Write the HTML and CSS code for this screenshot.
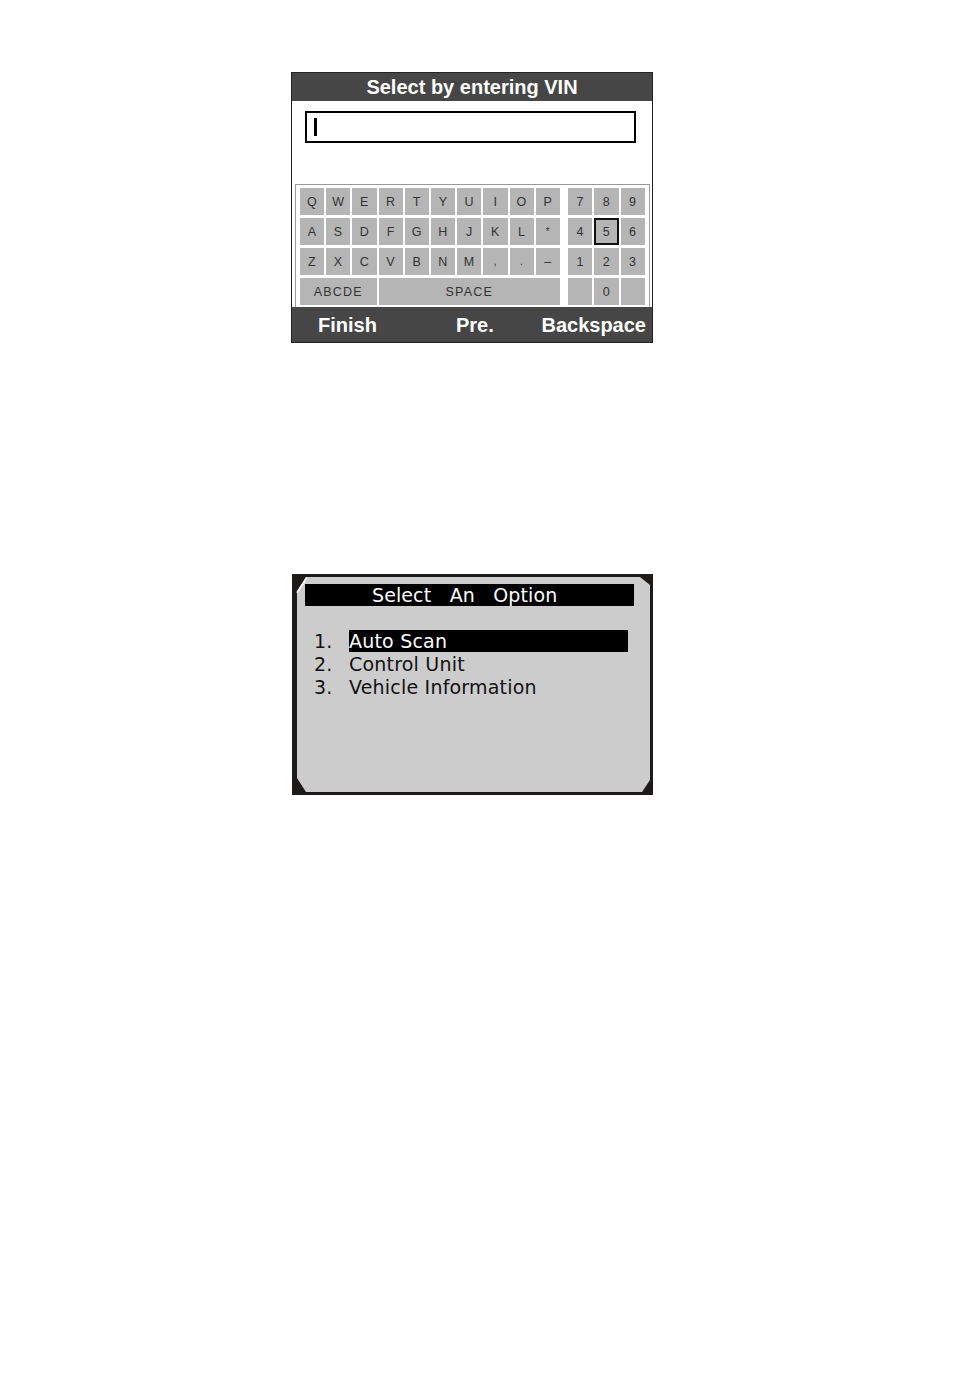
FILE: index.html
```html
<!DOCTYPE html>
<html lang="en">
<head>
<meta charset="utf-8">
<title>Screens</title>
<link rel="stylesheet" href="styles.css">
</head>
<body>
<div class="page">
  <section class="vin">
    <div class="vin-title">Select by entering VIN</div>
    <div class="vin-body">
      <div class="vin-input"><span class="cursor"></span></div>
      <div class="kbd">
        <div class="letters">
          <span class="key">Q</span><span class="key">W</span><span class="key">E</span><span class="key">R</span><span class="key">T</span><span class="key">Y</span><span class="key">U</span><span class="key">I</span><span class="key">O</span><span class="key">P</span>
          <span class="key">A</span><span class="key">S</span><span class="key">D</span><span class="key">F</span><span class="key">G</span><span class="key">H</span><span class="key">J</span><span class="key">K</span><span class="key">L</span><span class="key small">*</span>
          <span class="key">Z</span><span class="key">X</span><span class="key">C</span><span class="key">V</span><span class="key">B</span><span class="key">N</span><span class="key">M</span><span class="key small">,</span><span class="key small">.</span><span class="key">–</span>
          <span class="key wide3">ABCDE</span><span class="key wide7">SPACE</span>
        </div>
        <div class="numpad">
          <span class="key">7</span><span class="key">8</span><span class="key">9</span>
          <span class="key">4</span><span class="key selected">5</span><span class="key">6</span>
          <span class="key">1</span><span class="key">2</span><span class="key">3</span>
          <span class="key"></span><span class="key">0</span><span class="key"></span>
        </div>
      </div>
    </div>
    <div class="vin-foot">
      <span class="foot-finish">Finish</span>
      <span class="foot-pre">Pre.</span>
      <span class="foot-back">Backspace</span>
    </div>
  </section>

  <section class="menu">
    <div class="menu-inner">
      <div class="menu-title">Select   An   Option</div>
      <ol class="menu-list">
        <li class="menu-item active"><span class="num">1.</span><span class="label">Auto Scan</span></li>
        <li class="menu-item"><span class="num">2.</span><span class="label">Control Unit</span></li>
        <li class="menu-item"><span class="num">3.</span><span class="label">Vehicle Information</span></li>
      </ol>
    </div>
  </section>
</div>
</body>
</html>
```

FILE: styles.css
```css
* { box-sizing: border-box; }

html, body {
  margin: 0;
  padding: 0;
  background: #ffffff;
}

.page {
  padding-top: 72px;
  padding-left: 291px;
  display: flex;
  flex-direction: column;
  align-items: flex-start;
}

/* ---------- Screen 1: VIN keyboard ---------- */
.vin {
  width: 362px;
  border: 1px solid #222222;
  background: #ffffff;
  font-family: "Liberation Sans", Arial, sans-serif;
}

.vin-title {
  height: 28px;
  line-height: 29px;
  background: #464646;
  color: #ffffff;
  font-weight: bold;
  font-size: 20px;
  text-align: center;
}

.vin-body {
  height: 206px;
  padding-top: 10px;
  display: flex;
  flex-direction: column;
}

.vin-input {
  margin-left: 13px;
  width: 331px;
  height: 32px;
  border: 2px solid #000000;
  padding: 5px 0 0 7px;
}

.cursor {
  display: block;
  width: 3px;
  height: 18px;
  background: #000000;
}

.kbd {
  margin: 41px 2px 0 3px;
  border: 1px solid #9a9a9a;
  border-bottom: none;
  padding: 3px 4px 2px 4px;
  display: flex;
  gap: 8px;
  flex: 1;
}

.letters {
  width: 260px;
  display: grid;
  grid-template-columns: repeat(10, 1fr);
  grid-auto-rows: 27px;
  column-gap: 2px;
  row-gap: 3px;
}

.numpad {
  width: 77px;
  display: grid;
  grid-template-columns: repeat(3, 1fr);
  grid-auto-rows: 27px;
  column-gap: 2px;
  row-gap: 3px;
}

.key {
  background: #b5b5b5;
  color: #333333;
  font-size: 12.5px;
  letter-spacing: 0.5px;
  display: flex;
  align-items: center;
  justify-content: center;
}

.key.small { font-size: 10px; }

.key.wide3 {
  grid-column: span 3;
  letter-spacing: 1.2px;
}

.key.wide7 {
  grid-column: span 7;
  letter-spacing: 1.2px;
}

.key.selected {
  border: 2px solid #111111;
}

.vin-foot {
  height: 35px;
  background: #464646;
  color: #ffffff;
  font-weight: bold;
  font-size: 20px;
  line-height: 36px;
  display: flex;
  padding: 0 6px 0 26px;
}

.foot-pre { margin-left: 79px; }
.foot-back { margin-left: auto; }

/* ---------- Screen 2: option menu ---------- */
.menu {
  margin-top: 231px;
  margin-left: 1px;
  width: 361px;
  height: 221px;
  background: #1e1a1a;
  padding: 3px 3px 3px 5px;
  position: relative;
  font-family: "DejaVu Sans", Verdana, sans-serif;
}

.menu::after {
  content: "";
  position: absolute;
  left: 9px;
  top: 2px;
  width: 1.5px;
  height: 18px;
  background: #ffffff;
  transform: rotate(33deg);
}

.menu-inner {
  height: 215px;
  background: #cccccc;
  padding: 7px 16px 0 8px;
  clip-path: polygon(9px 0, calc(100% - 10px) 0, 100% 8px, 100% calc(100% - 12px), calc(100% - 8px) 100%, 9px 100%, 0 calc(100% - 14px), 0 15px);
}

.menu-title {
  height: 22px;
  line-height: 22px;
  background: #000000;
  color: #ffffff;
  font-size: 19px;
  letter-spacing: 0.1px;
  padding-left: 67px;
  white-space: pre;
}

.menu-list {
  list-style: none;
  margin: 24px 0 0 0;
  padding: 0 6px 0 9px;
}

.menu-item {
  display: flex;
  height: 23px;
  line-height: 22px;
  font-size: 19px;
  letter-spacing: 0.2px;
  color: #111111;
}

.menu-item .num { width: 35px; }

.menu-item .label {
  flex: 1;
  height: 22px;
}

.menu-item.active .label {
  background: #000000;
  color: #ffffff;
}
```
